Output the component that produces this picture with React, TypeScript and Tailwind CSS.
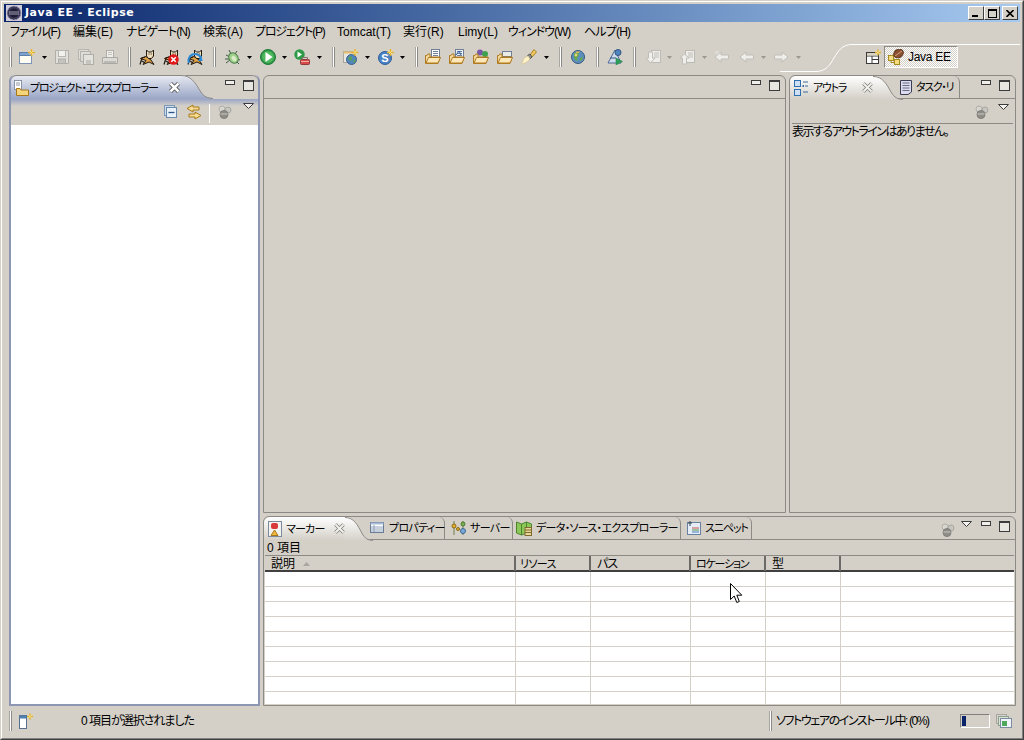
import React from "react";

type P = { className?: string; children?: React.ReactNode };

const Ic = ({ className = "", children }: P) => (
  <svg viewBox="0 0 16 16" width="16" height="16" className={"shrink-0 " + className}>{children}</svg>
);

const Sep = ({ className = "" }: P) => <div className={"w-[3px] h-[20px] shrink-0 bg-white border-l border-r border-l-[#a8a6a0] border-r-[#8c8a85] " + className} />;
const Caret = ({ className = "", off }: P & { off?: boolean }) => (
  <svg viewBox="0 0 5 3" width="5" height="3" className={"shrink-0 " + className}><path d="M0 0H5L2.5 3Z" fill={off ? "#9a9890" : "#000"} /></svg>
);

const Cat = ({ children, className }: P) => (
  <Ic className={className}>
    <path d="M1.5 9.5L7 7.5L12 11L15 15.5L10 13L4 15.5L7 11.5Z" fill="#e0a044" stroke="#231a10" strokeWidth="1" />
    <path d="M7.5 1L9.5 3H12.5L14.5 1V7L12.5 9.5H9.5L7.5 7Z" fill="#efdcb8" stroke="#231a10" strokeWidth="1" />
    <path d="M1 15.5L3 9L6 8M3 12L6 14" fill="none" stroke="#231a10" strokeWidth="1.2" />
    <path d="M9.5 5H10.5M11.8 5H12.8" stroke="#231a10" />
    {children}
  </Ic>
);

const NewI = ({ className }: P) => (
  <Ic className={className}>
    <rect x="0.5" y="3.5" width="12" height="11" fill="#fffdf2" stroke="#7b93b5" />
    <rect x="0.5" y="3.5" width="12" height="3" fill="#7fa3d0" stroke="#5f7ea8" />
    <path d="M12.5 0V7M9 3.5H16" stroke="#e6b432" strokeWidth="1.6" />
    <path d="M10.5 1.5L14.5 5.5M14.5 1.5L10.5 5.5" stroke="#f6e08a" strokeWidth="1" />
  </Ic>
);
const Save = ({ className }: P) => (
  <Ic className={className}>
    <path d="M1.5 1.5H14.5V14.5H1.5Z" fill="#e2e0da" stroke="#b0aea8" />
    <rect x="4.5" y="1.5" width="7" height="6" fill="#f2f1ed" stroke="#b8b6b0" />
    <rect x="4.5" y="10" width="7" height="4.5" fill="#c6c4be" stroke="#b0aea8" />
  </Ic>
);
const SaveAll = ({ className }: P) => (
  <Ic className={className}>
    <rect x="0.5" y="0.5" width="10" height="10" fill="#dedcd6" stroke="#b8b6b0" />
    <rect x="2.5" y="2.5" width="10" height="10" fill="#dedcd6" stroke="#b4b2ac" />
    <rect x="5.5" y="5.5" width="10" height="10" fill="#e4e2dc" stroke="#aeaca6" />
    <rect x="8" y="11" width="5" height="4" fill="#c6c4be" />
  </Ic>
);
const Print = ({ className }: P) => (
  <Ic className={className}>
    <rect x="4.5" y="1.5" width="7" height="7" fill="#efeeea" stroke="#b0aea8" />
    <path d="M6 3.5H10M6 5.5H10" stroke="#c4c2bc" />
    <path d="M0.5 8.5H15.5V14.5H0.5Z" fill="#dcdad4" stroke="#aaa8a2" />
    <rect x="2" y="12" width="12" height="2" fill="#bcbab4" />
  </Ic>
);
const Bug = ({ className }: P) => (
  <Ic className={className}>
    <path d="M1 6L5 8M1 14L5 11M4 1L6 5M15 11L12 10M14 15L11 12M12 2L10 5M0 10H5" stroke="#3b5a3b" strokeWidth="1" />
    <ellipse cx="8.5" cy="9" rx="4.5" ry="5.5" transform="rotate(-35 8.5 9)" fill="#9fcf8a" stroke="#4f7f4f" />
    <ellipse cx="9" cy="9.5" rx="2" ry="3" transform="rotate(-35 9 9.5)" fill="#d8ecc8" />
  </Ic>
);
const Run = ({ className }: P) => (
  <Ic className={className}>
    <circle cx="8" cy="8" r="7.5" fill="#2e9a48" stroke="#1f7a38" />
    <circle cx="8" cy="8" r="5.8" fill="#53b85f" />
    <path d="M5.5 3L12.5 8L5.5 13Z" fill="#fff" />
  </Ic>
);
const Ext = ({ className }: P) => (
  <Ic className={className}>
    <circle cx="5.5" cy="5.5" r="5.2" fill="#2e9a48" />
    <path d="M3.5 2.5L8 5.5L3.5 8.5Z" fill="#fff" />
    <rect x="6.5" y="10.5" width="9" height="5" rx="1" fill="#d84a4a" stroke="#8c3a3a" />
    <path d="M8.5 10.5V8.5H13.5V10.5" fill="none" stroke="#8c7070" />
    <rect x="7" y="12" width="8" height="1" fill="#f0b0a0" />
  </Ic>
);
const Star = ({ x = 12 }: { x?: number }) => (
  <g>
    <path d={`M${x} 0V7M${x - 3.5} 3.5H${x + 3.5}`} stroke="#e6b432" strokeWidth="1.5" />
    <path d={`M${x - 2} 1.5L${x + 2} 5.5M${x + 2} 1.5L${x - 2} 5.5`} stroke="#f8e48c" strokeWidth="1" />
  </g>
);
const GlobeNew = ({ className }: P) => (
  <Ic className={className}>
    <rect x="0.5" y="2.5" width="11" height="11" fill="#e8e6df" stroke="#a8a6a0" />
    <rect x="0.5" y="2.5" width="11" height="2" fill="#e6c070" />
    <circle cx="8.5" cy="10.5" r="5" fill="#4f86c0" stroke="#3c5f8c" />
    <path d="M5.5 8L8.5 7L9.5 10L7.5 12L5.5 11ZM10.5 11L12.5 10L12.5 13L10.5 14Z" fill="#5aa05a" />
    <Star x={12} />
  </Ic>
);
const SNew = ({ className }: P) => (
  <Ic className={className}>
    <circle cx="7" cy="9" r="6.5" fill="#4a82c4" stroke="#2f5f9c" />
    <text x="7" y="13" fontSize="11" fontWeight="700" textAnchor="middle" fill="#fff" fontFamily="Liberation Sans">S</text>
    <Star x={12.5} />
  </Ic>
);
const Folder = ({ className, children }: P) => (
  <Ic className={className}>
    {children}
    <path d="M0.5 14.5V6.5H2L3 5H5V8H15L13 14.5Z" fill="#f4d79a" stroke="#b07a20" />
    <path d="M1 14L3.5 8.5H15.5L13 14Z" fill="#fbe7b8" stroke="#b07a20" />
  </Ic>
);
const Doc = ({ c = "#fff" }: { c?: string }) => (
  <g>
    <rect x="6.5" y="0.5" width="8" height="8" fill={c} stroke="#6f7f96" />
    <path d="M8 2.5H13M8 4.5H13M8 6.5H13" stroke="#6f7f96" />
  </g>
);
const Brush = ({ className }: P) => (
  <Ic className={className}>
    <path d="M9 6L13 0.5L15.5 3L11 8Z" fill="#f0c860" stroke="#a88020" />
    <path d="M6.5 6.5L9 5L11 8L9 10Z" fill="#8f8f8f" stroke="#555" />
    <path d="M0.5 15.5L3 9L7 7L9 10L6 13Z" fill="#fff4c8" stroke="#d8c8a0" />
  </Ic>
);
const Globe = ({ className }: P) => (
  <Ic className={className}>
    <circle cx="8" cy="8" r="6.5" fill="#5a8fc0" stroke="#3a587c" />
    <path d="M4 4L8 3L9 6L7 9L8 12L5 11L4 8ZM10 9L13 8L12 11L10 12Z" fill="#6aa84a" />
    <path d="M6 2.5L10 2.5L9 4L6 4Z" fill="#d8b850" />
    <circle cx="6" cy="6" r="1.4" fill="#e8d080" />
  </Ic>
);
const Wiz = ({ className }: P) => (
  <Ic className={className}>
    <path d="M8 1L1 14H14Z" fill="#d0dcec" stroke="#4a6a96" />
    <circle cx="11" cy="3.5" r="3" fill="#4f86c0" stroke="#31547e" />
    <path d="M3 9H9" stroke="#31547e" />
    <path d="M9 9L15.5 12.5L9 16Z" fill="#2ea05c" stroke="#1f7a48" strokeWidth="0.5" />
  </Ic>
);
const DisDoc = ({ className, up }: P & { up?: boolean }) => (
  <Ic className={className}>
    <rect x="5.5" y="1.5" width="9" height="12" fill="#eeede9" stroke="#bcbab4" />
    <path d="M8 4H13M8 6H13M8 8H13" stroke="#c0beb8" />
    {up ? <path d="M0 9L4.5 5L9 9H6.5V15H2.5V9Z" fill="#f0efeb" stroke="#c0beb8" /> : <path d="M0 9H2.5V3H6.5V9H9L4.5 14Z" fill="#f0efeb" stroke="#c0beb8" />}
  </Ic>
);
const Arrow = ({ className, dir, star }: P & { dir: "l" | "r"; star?: boolean }) => (
  <Ic className={className}>
    <g transform={dir === "r" ? "" : "translate(16 0) scale(-1 1)"}>
      <path d="M1.5 6H9V3L15 8L9 13V10H1.5Z" fill="#eeede9" stroke="#c0beb8" />
    </g>
    {star ? <path d="M3 1V6M0.5 3.5H5.5" stroke="#dedcd4" strokeWidth="1.4" /> : null}
  </Ic>
);
const Tools = ({ className }: P) => (
  <Ic className={className}>
    <circle cx="5" cy="5" r="3" fill="#d8d6d0" stroke="#b0aea8" />
    <circle cx="11" cy="6" r="3" fill="#c8c6c0" stroke="#a8a6a0" />
    <circle cx="7" cy="10.5" r="4" fill="#8f8d88" stroke="#807e79" />
    <path d="M3.5 10H10.5" stroke="#c8c6c0" />
  </Ic>
);
const MinI = () => <div className="w-[10px] h-[5px] bg-[#efeeea] border border-[#3c3c3c]" />;
const MaxI = () => <div className="w-[11px] h-[11px] bg-[#e8e6e0] border border-[#3c3c3c] border-t-2" />;
const Menu3 = ({ className = "" }: P) => (
  <svg viewBox="0 0 11 6" width="11" height="6" className={"shrink-0 " + className}>
    <path d="M0.5 0.5H10.5L5.5 5.5Z" fill="#f4f3ef" stroke="#3c3c3c" />
  </svg>
);
const CloseX = ({ light }: { light?: boolean }) => (
  <svg viewBox="0 0 11 11" width="11" height="11" className="shrink-0">
    <path d="M1.5 1.5L9.5 9.5M9.5 1.5L1.5 9.5" stroke={light ? "#7c7a76" : "#3c3c3c"} strokeWidth={light ? 3.4 : 4} />
    <path d="M1.5 1.5L9.5 9.5M9.5 1.5L1.5 9.5" stroke={light ? "#f2f1ed" : "#fff"} strokeWidth={light ? 2 : 2.6} />
  </svg>
);

const ExplorerI = () => (
  <Ic>
    <rect x="1.5" y="0.5" width="7" height="9" fill="#fff" stroke="#8a94a8" />
    <path d="M3 3H7M3 5H7" stroke="#8a94a8" />
    <path d="M3.5 15.5V8.5H7L8 10H15.5V15.5Z" fill="#f6d47c" stroke="#a87818" />
  </Ic>
);
const OutlineI = () => (
  <Ic>
    <rect x="0.5" y="0.5" width="6" height="6" fill="#cfe0f4" stroke="#2f6fb0" />
    <rect x="0.5" y="9.5" width="6" height="6" fill="#cfe0f4" stroke="#2f6fb0" />
    <path d="M9 2H14M9 12H14M11 6H14" stroke="#3c6a98" />
    <rect x="8.5" y="5" width="1.5" height="2" fill="#3c6a98" />
  </Ic>
);
const TaskI = () => (
  <Ic>
    <path d="M2.5 1.5H13.5V13L10 15.5H2.5Z" fill="#dcdcf0" stroke="#3c3c50" />
    <path d="M4.5 4H11.5M4.5 6.5H11.5M4.5 9H11.5M4.5 11.5H11.5" stroke="#6a6a84" />
  </Ic>
);
const MarkerI = () => (
  <svg viewBox="0 0 14 16" width="14" height="16" className="shrink-0">
    <rect x="0.5" y="0.5" width="13" height="15" fill="#f4f2ee" stroke="#7c8aa0" />
    <rect x="3" y="2" width="7" height="6" rx="2" fill="#d83a3a" />
    <path d="M6.5 9L10 14.5H3Z" fill="#f0b840" stroke="#a87818" />
  </svg>
);
const TableI = () => (
  <Ic>
    <rect x="0.5" y="2.5" width="13" height="10" fill="#fff" stroke="#6a7c96" />
    <rect x="0.5" y="2.5" width="13" height="2" fill="#a8bcd8" />
    <path d="M1 7H13M1 9H13M1 11H13M4 5V12" stroke="#8ea0ba" />
  </Ic>
);
const ServerI = () => (
  <Ic>
    <path d="M3 1V15M12 1V15" stroke="#6a7c50" />
    <circle cx="3" cy="6" r="2" fill="#e8b030" stroke="#8a6a10" />
    <circle cx="12" cy="4" r="2" fill="#7cb050" stroke="#4a7a30" />
    <circle cx="7" cy="9" r="1.5" fill="#e8b030" stroke="#8a6a10" />
    <circle cx="12" cy="11" r="2.5" fill="#7ca8d8" stroke="#3c6a98" />
  </Ic>
);
const DataI = () => (
  <Ic>
    <path d="M0.5 2L5.5 4L10.5 2L15.5 4V15L10.5 13L5.5 15L0.5 13Z" fill="#8cc858" stroke="#4e8430" />
    <path d="M5.5 4V15M10.5 2V13" stroke="#4e8430" />
    <rect x="9" y="7.5" width="6.5" height="8" fill="#e8d898" stroke="#806830" />
    <path d="M9 10H15.5M9 12.5H15.5" stroke="#806830" />
  </Ic>
);
const SnippetI = () => (
  <svg viewBox="0 0 14 16" width="14" height="16" className="shrink-0">
    <rect x="0.5" y="2.5" width="13" height="12" fill="#e4ecf6" stroke="#6a80a0" />
    <path d="M3 1V6M1 3H5" stroke="#384858" />
    <path d="M5 8H12" stroke="#d05050" />
    <path d="M5 10H12" stroke="#4a9a50" />
    <path d="M5 12H12" stroke="#4f7fc0" />
  </svg>
);
const CoffeeI = () => (
  <Ic>
    <rect x="0.5" y="6.5" width="5" height="5" fill="#f6dc80" stroke="#a88a20" />
    <rect x="6.5" y="10.5" width="5" height="5" fill="#f6dc80" stroke="#a88a20" />
    <path d="M3 11V13.5H6.5M4.5 6L8 9" stroke="#a88a20" fill="none" />
    <ellipse cx="10.5" cy="4.5" rx="5" ry="4" transform="rotate(-30 10.5 4.5)" fill="#8c5030" stroke="#5a3018" />
    <path d="M7 7L14 2" stroke="#d0a080" />
  </Ic>
);
const PerspI = ({ className }: P) => (
  <Ic className={className}>
    <rect x="0.5" y="3.5" width="12" height="11" fill="#fff" stroke="#3a3a3a" />
    <path d="M1 7H12M6 7V14M6 10.5H12" stroke="#3a3a3a" />
    <rect x="1" y="4" width="11" height="2.5" fill="#d8d4c0" />
    <path d="M12 0.5V6.5M9 3.5H15" stroke="#e0b030" strokeWidth="1.4" />
    <path d="M10 1.5L14 5.5M14 1.5L10 5.5" stroke="#f8e48c" strokeWidth="0.9" />
  </Ic>
);

const MinMax = ({ className = "" }: P) => (
  <div className={"flex items-start gap-[8px] " + className}>
    <MinI />
    <MaxI />
  </div>
);

const Curve = ({ id, from, to, w = 32 }: { id: string; from: string; to: string; w?: number }) => (
  <svg viewBox={`0 0 ${w} 24`} width={w} height="24" className="shrink-0 -mb-px">
    <defs>
      <linearGradient id={id} x1="0" y1="0" x2="0" y2="1">
        <stop offset="0" stopColor={from} />
        <stop offset="1" stopColor={to} />
      </linearGradient>
    </defs>
    <path d={`M0 0C${w * 0.32} 0 ${w * 0.45} 8 ${w * 0.6} 16C${w * 0.72} 22 ${w * 0.82} 23 ${w} 23V24H0Z`} fill={`url(#${id})`} />
    <path d={`M0 0.5C${w * 0.32} 0.5 ${w * 0.45} 8 ${w * 0.6} 16C${w * 0.72} 22 ${w * 0.82} 23 ${w} 23.5`} fill="none" stroke="#8c8a85" />
  </svg>
);

const Inactive = ({ icon, label, w, lc, pl }: { icon: React.ReactNode; label: string; w: string; lc: string; pl: string }) => (
  <div className={"h-[22px] flex items-center gap-[3px] shrink-0 border-r border-[#8c8a85] rounded-tr-[6px] relative " + w + " " + pl}>
    {icon}
    <span className={"whitespace-nowrap " + lc}>{label}</span>
  </div>
);

const Col = ({ w }: { w: string }) => <div className={"h-full shrink-0 border-r border-[#d4d0c8] " + w} />;

const HCell = ({ w, children, pl }: P & { w: string; pl: string }) => (
  <div className={"h-[15px] shrink-0 flex items-center border-r-2 border-r-[#6c6a66] relative " + w + " " + pl}>{children}</div>
);

const ROWS = [0, 1, 2, 3, 4, 5, 6, 7, 8];

const menus: [string, string][] = [
  ["ファイル(F)", "w-[63px] tracking-[-1px]"],
  ["編集(E)", "w-[53px]"],
  ["ナビゲート(N)", "w-[77px] tracking-[-1px]"],
  ["検索(A)", "w-[52px]"],
  ["プロジェクト(P)", "w-[82px] tracking-[-1.2px]"],
  ["Tomcat(T)", "w-[66px]"],
  ["実行(R)", "w-[55px]"],
  ["Limy(L)", "w-[50px]"],
  ["ウィンドウ(W)", "w-[76px] tracking-[-1px]"],
  ["ヘルプ(H)", "w-[60px] tracking-[-0.8px]"],
];

export default function App() {
  return (
    <div className="w-[1024px] h-[740px] overflow-hidden bg-[#d4d0c8] border border-t-[#d4d0c8] border-l-[#d4d0c8] border-r-[#404040] border-b-[#404040] text-[12px] leading-[14px] text-black [font-family:'Liberation_Sans','Noto_Sans_CJK_JP',sans-serif] [font-feature-settings:'palt']">
      <div className="w-full h-full border border-t-white border-l-white border-r-[#808080] border-b-[#808080] p-[2px] flex flex-col relative">
        {/* Title bar */}
        <div className="h-[18px] shrink-0 flex items-center pl-[2px] pr-[2px] bg-gradient-to-r from-[#0a246a] to-[#a6caf0]">
          <svg viewBox="0 0 16 16" width="16" height="16" className="shrink-0">
            <rect x="0" y="0" width="16" height="16" fill="#cfcbd8" />
            <circle cx="8" cy="8" r="7" fill="#3c3a58" stroke="#a8a6c0" strokeDasharray="2 1" />
            <circle cx="8" cy="8" r="4.5" fill="#1e1c34" />
            <path d="M3 7H13M3 9H13" stroke="#c8c4d8" strokeWidth="0.8" />
          </svg>
          <span className="ml-[3px] text-white font-bold text-[11px] tracking-[0.5px] [font-family:'DejaVu_Sans',sans-serif] whitespace-nowrap">Java EE - Eclipse</span>
          <div className="ml-auto flex items-center">
            {[0, 1].map((i) => (
              <div key={i} className="w-[16px] h-[14px] bg-[#d4d0c8] border border-t-white border-l-white border-r-[#404040] border-b-[#404040] flex items-center justify-center">
                {i === 0 ? <div className="w-[6px] h-[2px] bg-black mt-[6px] -ml-[3px]" /> : <div className="w-[9px] h-[9px] border border-black border-t-2" />}
              </div>
            ))}
            <div className="ml-[2px] w-[16px] h-[14px] bg-[#d4d0c8] border border-t-white border-l-white border-r-[#404040] border-b-[#404040] flex items-center justify-center">
              <svg viewBox="0 0 8 7" width="8" height="7"><path d="M0.5 0L7.5 7M7.5 0L0.5 7" stroke="#000" strokeWidth="1.6" /></svg>
            </div>
          </div>
        </div>
        {/* Menu */}
        <div className="h-[19px] shrink-0 flex items-center pl-[6px]">
          {menus.map(([t, w]) => (
            <div key={t} className={"shrink-0 whitespace-nowrap " + w}>{t}</div>
          ))}
        </div>
        {/* Toolbar */}
        <div className="h-[34px] shrink-0 flex items-center relative pb-[2px]">
          <svg viewBox="0 0 240 34" width="240" height="34" className="absolute right-0 top-0 pointer-events-none">
            <path d="M0 30.5H36C56 30.5 52 3.5 72 3.5H240" fill="none" stroke="#fff" />
          </svg>
          <Sep className="ml-[5px]" />
          <NewI className="ml-[7px]" />
          <Caret className="ml-[7px]" />
          <Save className="ml-[7px]" />
          <SaveAll className="ml-[8px]" />
          <Print className="ml-[8px]" />
          <Sep className="ml-[10px]" />
          <Cat className="ml-[8px]" />
          <Cat className="ml-[8px]">
            <circle cx="10.5" cy="10.5" r="5.2" fill="#e01818" />
            <path d="M8.3 8.3L12.7 12.7M12.7 8.3L8.3 12.7" stroke="#fff" strokeWidth="1.6" />
          </Cat>
          <Cat className="ml-[8px]">
            <path d="M2 14A6.5 6.5 0 0 1 14 9" fill="none" stroke="#2a8ad8" strokeWidth="2" />
            <path d="M11 12L15.5 12L14.5 7Z" fill="#2a8ad8" />
          </Cat>
          <Sep className="ml-[10px]" />
          <Bug className="ml-[9px]" />
          <Caret className="ml-[6px]" />
          <Run className="ml-[8px]" />
          <Caret className="ml-[6px]" />
          <Ext className="ml-[7px]" />
          <Caret className="ml-[7px]" />
          <Sep className="ml-[10px]" />
          <GlobeNew className="ml-[8px]" />
          <Caret className="ml-[6px]" />
          <SNew className="ml-[8px]" />
          <Caret className="ml-[6px]" />
          <Sep className="ml-[10px]" />
          <Folder className="ml-[7px]"><Doc /></Folder>
          <Folder className="ml-[8px]"><Doc c="#e8f0fa" /><path d="M7 6L10 2L12 6" fill="none" stroke="#2f5fa0" /></Folder>
          <Folder className="ml-[8px]">
            <circle cx="7" cy="3.5" r="3" fill="#7a58a8" />
            <circle cx="12" cy="5" r="3" fill="#3fa050" />
          </Folder>
          <Folder className="ml-[8px]"><rect x="5.5" y="2.5" width="9" height="5" fill="#eceae4" stroke="#6f7f96" /></Folder>
          <Brush className="ml-[8px]" />
          <Caret className="ml-[7px]" />
          <Sep className="ml-[10px]" />
          <Globe className="ml-[8px]" />
          <Sep className="ml-[10px]" />
          <Wiz className="ml-[8px]" />
          <Sep className="ml-[10px]" />
          <DisDoc className="ml-[10px]" />
          <Caret off className="ml-[5px]" />
          <DisDoc up className="ml-[8px]" />
          <Caret off className="ml-[6px]" />
          <Arrow dir="l" star className="ml-[7px]" />
          <Arrow dir="l" className="ml-[9px]" />
          <Caret off className="ml-[6px]" />
          <Arrow dir="r" className="ml-[7px]" />
          <Caret off className="ml-[7px]" />
          <PerspI className="ml-[65px] relative" />
          <div className="ml-[2px] w-[74px] h-[22px] shrink-0 relative flex items-center gap-[4px] pl-[3px] border border-t-[#8c8a85] border-l-[#8c8a85] border-r-white border-b-white bg-[repeating-conic-gradient(#ffffff_0_25%,#d4d0c8_0_50%)] bg-[length:2px_2px]">
            <CoffeeI />
            <span className="whitespace-nowrap tracking-[-0.3px]">Java EE</span>
          </div>
        </div>
        {/* Main */}
        <div className="h-[631px] shrink-0 flex pl-[5px] gap-[3px] items-stretch">
          {/* Left */}
          <div className="w-[251px] shrink-0 flex flex-col rounded-t-[6px] border-2 border-t-0 border-[#8d97b3]">
            <div className="h-[24px] shrink-0 flex items-start border-t border-[#8c8a85] rounded-t-[6px]">
              <div className="h-[24px] w-[170px] shrink-0 flex items-center gap-[1px] pl-[2px] rounded-tl-[6px] bg-gradient-to-b from-[#e8eaf2] to-[#9aa6c6] -mt-px border-t border-[#8c8a85]">
                <ExplorerI />
                <span className="whitespace-nowrap w-[138px] text-[11px] tracking-[-1.25px]">プロジェクト・エクスプローラー</span>
                <CloseX />
              </div>
              <div className="-mt-px"><Curve id="g1" from="#e8eaf2" to="#9aa6c6" /></div>
              <MinMax className="ml-[12px] mt-[4px]" />
            </div>
            <div className="h-[26px] shrink-0 flex items-start bg-[linear-gradient(#9aa6c6,#d4d0c8_7px)] pl-[152px] pt-[5px]">
              <svg viewBox="0 0 16 16" width="16" height="16" className="shrink-0">
                <rect x="1.5" y="1.5" width="10" height="10" fill="#cfdcec" stroke="#7c98b8" />
                <rect x="3.5" y="3.5" width="10" height="10" fill="#e8f0f8" stroke="#6888ac" />
                <path d="M5.5 8.5H11.5" stroke="#29558c" strokeWidth="1.3" />
              </svg>
              <svg viewBox="0 0 16 16" width="16" height="16" className="ml-[7px] shrink-0">
                <path d="M7 1L1 4.5L7 8V6H13V3H7Z" fill="#f6dc90" stroke="#a87818" />
                <path d="M9 8L15 11.5L9 15V13H3V10H9Z" fill="#f6dc90" stroke="#a87818" />
              </svg>
              <div className="ml-[7px] w-px h-[19px] bg-[#9a9890] border-r border-white" />
              <Tools className="ml-[7px]" />
              <Menu3 className="ml-[10px] mt-[-1px]" />
            </div>
            <div className="flex-1 bg-white" />
          </div>
          {/* Right column */}
          <div className="w-[753px] shrink-0 flex flex-col gap-[3px]">
            <div className="h-[438px] shrink-0 flex gap-[3px]">
              <div className="w-[523px] shrink-0 border border-[#8c8a85] rounded-t-[6px] flex flex-col">
                <div className="h-[23px] shrink-0 border-b border-[#8c8a85] flex justify-end pr-[5px] pt-[4px]">
                  <MinMax />
                </div>
              </div>
              <div className="w-[227px] shrink-0 border border-[#8c8a85] rounded-t-[6px] flex flex-col">
                <div className="h-[23px] shrink-0 border-b border-[#8c8a85] flex items-start">
                  <div className="h-[23px] w-[83px] shrink-0 flex items-center gap-[3px] pl-[4px] rounded-tl-[6px] bg-gradient-to-b from-white to-[#d4d0c8]">
                    <OutlineI />
                    <span className="whitespace-nowrap w-[46px] text-[11px] tracking-[-1.3px]">アウトラ</span>
                    <CloseX light />
                  </div>
                  <Curve id="g2" from="#ffffff" to="#d4d0c8" w={30} />
                  <div className="flex items-center h-[22px] gap-[2px] w-[62px] shrink-0 border-r border-[#8c8a85] rounded-tr-[6px] -ml-[5px] relative">
                    <TaskI />
                    <span className="whitespace-nowrap text-[11px] tracking-[-1.3px]">タスク・リ</span>
                  </div>
                  <MinMax className="ml-auto mr-[5px] mt-[4px]" />
                </div>
                <div className="h-[25px] shrink-0 border-b border-[#8c8a85] flex items-start justify-end pr-[4px] pt-[5px] mx-[2px]">
                  <Tools />
                  <Menu3 className="ml-[8px]" />
                </div>
                <div className="whitespace-nowrap pl-[2px] pt-[1px] tracking-[-1.5px]">表示するアウトラインはありません。</div>
              </div>
            </div>
            <div className="h-[190px] shrink-0 border border-[#8c8a85] rounded-t-[6px] flex flex-col">
              <div className="h-[23px] shrink-0 border-b border-[#8c8a85] flex items-start">
                <div className="h-[23px] w-[81px] shrink-0 flex items-center gap-[4px] pl-[4px] rounded-tl-[6px] bg-gradient-to-b from-white to-[#d4d0c8]">
                  <MarkerI />
                  <span className="whitespace-nowrap w-[46px] text-[11px] tracking-[-0.8px]">マーカー</span>
                  <CloseX light />
                </div>
                <Curve id="g3" from="#ffffff" to="#d4d0c8" w={28} />
                <Inactive icon={<TableI />} label="プロパティー" w="w-[79px] -ml-[7px]" pl="pl-[4px]" lc="text-[11px] tracking-[-0.7px]" />
                <Inactive icon={<ServerI />} label="サーバー" w="w-[68px]" pl="pl-[6px]" lc="text-[11px] tracking-[-0.6px]" />
                <Inactive icon={<DataI />} label="データ・ソース・エクスプローラー" w="w-[168px]" pl="pl-[3px]" lc="ml-[1px] text-[11px] tracking-[-0.7px]" />
                <Inactive icon={<SnippetI />} label="スニペット" w="w-[71px]" pl="pl-[6px]" lc="ml-[1px] text-[11px] tracking-[-1.1px]" />
                <div className="ml-auto flex items-start mr-[5px] mt-[4px]">
                  <Tools className="mt-[1px]" />
                  <Menu3 className="ml-[5px]" />
                  <MinMax className="ml-[9px]" />
                </div>
              </div>
              <div className="h-[15px] shrink-0 pl-[3px] flex items-center">0 項目</div>
              <div className="h-[17px] shrink-0 flex mx-[1px] border-t border-[#8c8a85] border-b-2 border-b-[#404040] bg-[#d4d0c8]">
                <HCell w="w-[251px]" pl="pl-[6px]">
                  説明
                  <svg viewBox="0 0 7 4" width="7" height="4" className="ml-[8px]"><path d="M0 4L3.5 0L7 4Z" fill="#a8a6a0" /></svg>
                </HCell>
                <HCell w="w-[75px]" pl="pl-[4px] text-[11px] tracking-[-0.6px]">リソース</HCell>
                <HCell w="w-[100px]" pl="pl-[6px] tracking-[-1px]">パス</HCell>
                <HCell w="w-[75px]" pl="pl-[5px] text-[11px] tracking-[-1.2px]">ロケーション</HCell>
                <HCell w="w-[75px]" pl="pl-[6px]">型</HCell>
              </div>
              <div className="flex-1 mx-[1px] mb-[1px] bg-white relative overflow-hidden flex flex-col">
                {ROWS.map((i) => (
                  <div key={i} className="flex shrink-0 border-b border-[#d4d0c8] h-[15px]">
                    <Col w="w-[251px]" />
                    <Col w="w-[75px]" />
                    <Col w="w-[100px]" />
                    <Col w="w-[75px]" />
                    <Col w="w-[75px]" />
                  </div>
                ))}
              </div>
            </div>
          </div>
        </div>
        {/* Status */}
        <div className="flex-1 flex items-center relative">
          <Sep className="ml-[5px]" />
          <svg viewBox="0 0 16 16" width="16" height="16" className="ml-[7px] shrink-0">
            <rect x="0.5" y="2.5" width="7" height="13" fill="#fff" stroke="#5a6f8c" />
            <rect x="0.5" y="2.5" width="7" height="3" fill="#4f7fb0" />
            <path d="M11 0.5V6.5M8 3.5H14" stroke="#e0b030" strokeWidth="1.4" />
            <path d="M9 1.5L13 5.5M13 1.5L9 5.5" stroke="#f8e48c" strokeWidth="0.9" />
          </svg>
          <span className="ml-[46px] whitespace-nowrap tracking-[-1px]">0 項目が選択されました</span>
          <Sep className="ml-auto" />
          <span className="ml-[4px] w-[184px] whitespace-nowrap tracking-[-1.4px]">ソフトウェアのインストール中: (0%)</span>
          <div className="w-[30px] h-[14px] shrink-0 border border-t-[#808080] border-l-[#808080] border-r-white border-b-white pl-[1px] py-[1px]">
            <div className="w-[4px] h-full bg-[#0a246a]" />
          </div>
          <svg viewBox="0 0 16 16" width="16" height="16" className="ml-[6px] mr-[8px] shrink-0">
            <rect x="0.5" y="1.5" width="10" height="9" fill="#d8d4cc" stroke="#a8a6a0" />
            <rect x="2.5" y="3.5" width="10" height="9" fill="#d8e4d8" stroke="#90a090" />
            <rect x="4.5" y="5.5" width="11" height="9" fill="#f0f4f8" stroke="#7c8ca0" />
            <rect x="6" y="8" width="5" height="5" fill="#4fa85a" />
          </svg>
        </div>
        {/* Mouse pointer over the table */}
        <svg viewBox="0 0 13 21" width="13" height="21" className="absolute left-[728px] top-[581px] pointer-events-none">
          <path d="M0.5 0.5V16.5L4.2 13L6.8 19.5L9.3 18.5L6.8 12.2H11.8Z" fill="#fff" stroke="#000" />
        </svg>
      </div>
    </div>
  );
}
